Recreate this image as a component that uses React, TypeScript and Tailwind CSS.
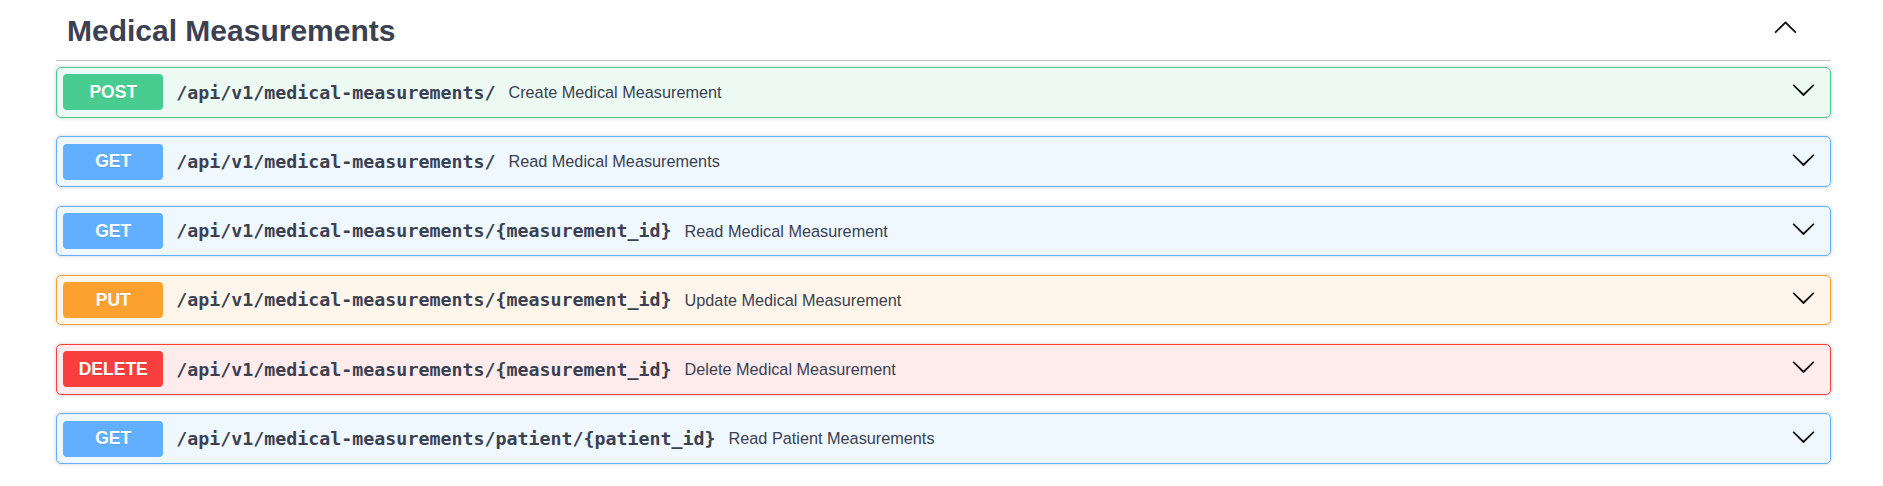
import React from "react";

type Method = "POST" | "GET" | "PUT" | "DELETE";

const styles: Record<Method, { box: string; badge: string }> = {
  POST: { box: "border-[#49cc90] bg-[#edfaf4]", badge: "bg-[#49cc90]" },
  GET: { box: "border-[#61affe] bg-[#eff7ff]", badge: "bg-[#61affe]" },
  PUT: { box: "border-[#fca130] bg-[#fff5ea]", badge: "bg-[#fca130]" },
  DELETE: { box: "border-[#f93e3e] bg-[#feecec]", badge: "bg-[#f93e3e]" },
};

const ops: { method: Method; path: string; summary: string }[] = [
  { method: "POST", path: "/api/v1/medical-measurements/", summary: "Create Medical Measurement" },
  { method: "GET", path: "/api/v1/medical-measurements/", summary: "Read Medical Measurements" },
  { method: "GET", path: "/api/v1/medical-measurements/{measurement_id}", summary: "Read Medical Measurement" },
  { method: "PUT", path: "/api/v1/medical-measurements/{measurement_id}", summary: "Update Medical Measurement" },
  { method: "DELETE", path: "/api/v1/medical-measurements/{measurement_id}", summary: "Delete Medical Measurement" },
  { method: "GET", path: "/api/v1/medical-measurements/patient/{patient_id}", summary: "Read Patient Measurements" },
];

function ArrowDown() {
  return (
    <svg width="25" height="25" viewBox="0 0 20 20" className="mb-[5px] shrink-0" fill="#111">
      <path d="M17.418 6.109c.272-.268.709-.268.979 0s.271.701 0 .969l-7.908 7.83c-.27.268-.707.268-.979 0l-7.908-7.830c-.27-.268-.27-.701 0-.969.271-.268.709-.268.979 0L10 13.25l7.418-7.141z" />
    </svg>
  );
}

function ArrowUp() {
  return (
    <svg width="25" height="25" viewBox="0 0 20 20" className="mb-[7px] shrink-0" fill="#111">
      <path d="M17.418 14.908c.272.268.709.268.979 0s.271-.701 0-.969l-7.908-7.83c-.27-.268-.707-.268-.979 0l-7.908 7.83c-.27.268-.27.701 0 .969.271.268.709.268.979 0L10 7.702l7.418 7.206z" />
    </svg>
  );
}

export default function App() {
  return (
    <div className="w-[1883px] min-h-[486px] bg-white pl-[56px] pr-[52px] text-[#3b4151] font-['Liberation_Sans',Arial,sans-serif]">
      {/* tag header */}
      <div className="flex h-[61px] items-center border-b border-[rgba(59,65,81,0.3)] pl-[11px] pr-[33px]">
        <h3 className="flex-1 pt-[1px] text-[30px] font-bold leading-[34px]">Medical Measurements</h3>
        <ArrowUp />
      </div>

      <div className="pt-[6px]">
        {ops.map((op, i) => (
          <div
            key={i}
            className={`mb-[18.75px] flex items-center rounded-[5px] border p-[6.25px] shadow-[0_0_4px_rgba(0,0,0,0.19)] ${styles[op.method].box}`}
          >
            <span
              className={`flex h-[36px] w-[100px] shrink-0 items-center justify-center rounded-[4px] text-[17.5px] font-bold text-white [text-shadow:0_1px_0_rgba(0,0,0,0.1)] ${styles[op.method].badge}`}
            >
              {op.method}
            </span>
            <span className="px-[13px] font-['DejaVu_Sans_Mono',monospace] text-[18.3px] font-bold">
              {op.path}
            </span>
            <span className="flex-1 text-[16.25px]">{op.summary}</span>
            <span className="mr-[8px] flex items-center">
              <ArrowDown />
            </span>
          </div>
        ))}
      </div>
    </div>
  );
}
